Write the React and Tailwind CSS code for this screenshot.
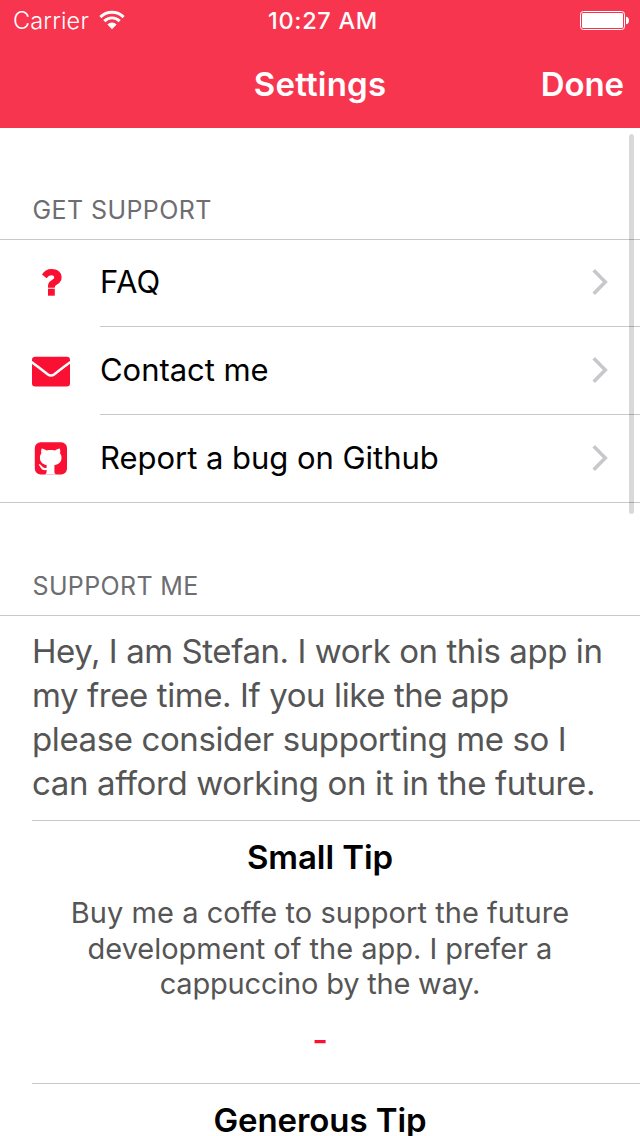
function WifiIcon() {
  return (
    <svg width="26" height="20" viewBox="0 0 26 20" className="shrink-0" fill="none" stroke="#fff">
      <path d="M1.4 7.1a16.4 16.4 0 0 1 23.2 0" strokeWidth="3" />
      <path d="M5.3 11.1a10.900 10.900 0 0 1 15.400 0" strokeWidth="2.900" />
      <path d="M13 19.200l-4.600-4.700a6.500 6.500 0 0 1 9.200 0z" fill="#fff" stroke="none" />
    </svg>
  );
}

function BatteryIcon() {
  return (
    <svg width="49" height="19" viewBox="0 0 49 19" className="shrink-0">
      <rect x="0.5" y="0.5" width="44" height="18" rx="2.8" fill="none" stroke="#fff" />
      <rect x="2" y="2" width="41" height="15" rx="1.2" fill="#fff" />
      <path d="M46 5.8c1.8 0 3 1.600 3 3.700s-1.200 3.700-3 3.700z" fill="#fff" />
    </svg>
  );
}

function QuestionIcon() {
  return (
    <svg width="40" height="40" viewBox="0 0 40 40" fill="#fa1032">
      <path d="M10 11.600C12 8 15.200 6 19.600 6c5.900 0 10 3.200 10 8.200 0 3.500-1.700 5.600-4.600 7.300-1.500.9-2.200 1.500-2.200 3.200H16v-1.600c0-3 1.300-4.700 4-6.200 1.600-.9 2.200-1.500 2.200-2.600 0-1.300-1.100-2.100-2.800-2.100-2 0-3.200.9-4.800 3z" />
      <path d="M16 25.700h6.800v7H16z" />
    </svg>
  );
}

function EnvelopeIcon() {
  return (
    <svg width="40" height="40" viewBox="0 0 40 40">
      <rect x="0" y="6.800" width="38" height="29.600" rx="3.200" fill="#fa1032" />
      <path d="M-0.500 12C4 15.200 10 19.800 15.600 24.200c2.600 1.900 4.200 1.900 6.800 0C28 19.800 34 15.200 38.500 12" fill="none" stroke="#fff" strokeWidth="2.500" />
    </svg>
  );
}

function GithubIcon() {
  return (
    <svg width="40" height="40" viewBox="0 0 40 40">
      <rect x="2.800" y="4.200" width="32.200" height="32.200" rx="5.800" fill="#fa1032" />
      <path
        d="M9.700 10.400c1.700.2 3.300 1 4.700 2.100 2.800-.6 5.800-.6 8.600 0 1.400-1.100 3-1.900 4.700-2.100.7 1.700.7 3.300.3 4.800 1 1.200 1.500 2.700 1.500 4.600 0 4.100-2.600 6.600-7.100 7.400v6.600c0 1.300.4 2 1.600 2.600H13c1.200-.6 1.600-1.300 1.600-2.600V32c-3.300.5-5-.4-6.200-2.700-.4-.9-.8-1.600-1.600-2.300-.3-.6.6-.9 1.400-.5 1 .5 1.400 1.200 2 2 1 1.300 2.200 1.700 4.400 1.200v-2.600c-4.300-.9-6.700-3.300-6.700-7.300 0-1.900.5-3.400 1.500-4.600-.4-1.500-.4-3.100.3-4.800z"
        fill="#fff"
      />
    </svg>
  );
}

function Chevron() {
  return (
    <svg width="16" height="26" viewBox="0 0 16 26" className="shrink-0" fill="none" stroke="#c7c7cc" strokeWidth="3.500">
      <path d="M1.700 1.200L13.300 13 1.700 24.800" />
    </svg>
  );
}

function SectionHeader({ children, className }) {
  return (
    <div className={"flex items-end border-b border-[#c8c7cc] pl-[32.5px] text-[25px] leading-8 text-[#6d6d72] " + className}>
      {children}
    </div>
  );
}

function Row({ icon, label, className, spacing }) {
  return (
    <div className={"flex " + className}>
      <div className="w-[100px] pt-[23px] pl-8">{icon}</div>
      <div className="flex flex-1 items-center justify-between border-b border-[#c8c7cc] pr-8 pb-0.5">
        <span className={"text-[31px] " + spacing}>{label}</span>
        <Chevron />
      </div>
    </div>
  );
}

function Tip({ title, lines }) {
  return (
    <div className="ml-8 h-[263px] border-b border-[#c8c7cc] pt-4 pr-8 text-center">
      <h2 className="text-[33px] leading-10 font-semibold tracking-[-0.08px]">{title}</h2>
      {lines && (
        <>
          <p className="mt-[18px] text-[29px] leading-[35.5px] text-[#555]">
            {lines.map(([text, spacing]) => (
              <span key={text} className={"block whitespace-nowrap " + spacing}>{text}</span>
            ))}
          </p>
          <button className="mt-[18px] block w-full text-[34px] leading-10 font-medium text-[#fa1032]">-</button>
        </>
      )}
    </div>
  );
}

export default function App() {
  return (
    <div className="relative h-[1136px] w-[640px] overflow-hidden bg-white font-['Inter','Liberation_Sans',sans-serif] text-black">
      <header className="h-32 bg-[#f7354f] text-white">
        <div className="grid h-10 grid-cols-3 items-center pr-[11px] pl-3 text-[23.5px]">
          <div className="flex items-center gap-2.5 pl-px">
            <span className="pt-0.5 font-[350] tracking-[0.15px]">Carrier</span>
            <WifiIcon />
          </div>
          <span className="pt-0.5 pl-[5px] text-center font-medium tracking-[0.7px] whitespace-nowrap">10:27 AM</span>
          <div className="flex justify-end pt-px"><BatteryIcon /></div>
        </div>
        <div className="grid h-[88px] grid-cols-3 items-center px-4 pt-0.5 text-[33px] font-semibold">
          <span />
          <h1 className="text-center tracking-[0.2px]">Settings</h1>
          <span className="text-right tracking-[-0.1px]">Done</span>
        </div>
      </header>

      <SectionHeader className="h-28 pb-[13px] tracking-[0.4px]">GET SUPPORT</SectionHeader>
      <div>
        <Row className="h-[87px]" icon={<QuestionIcon />} label="FAQ" spacing="tracking-[0.4px]" />
        <Row className="h-[88px]" icon={<EnvelopeIcon />} label="Contact me" spacing="pt-0.5 tracking-[-0.05px]" />
        <div className="border-b border-[#c8c7cc]">
          <Row className="-mb-px h-[88px]" icon={<GithubIcon />} label="Report a bug on Github" spacing="pt-0.5 tracking-[-0.03px]" />
        </div>
      </div>

      <SectionHeader className="h-[113px] pb-[13px] tracking-[0.35px]">SUPPORT ME</SectionHeader>
      <p className="ml-8 h-[205px] border-b border-[#c8c7cc] pt-[13px] text-[33px] leading-11 whitespace-nowrap text-[#555]">
        <span className="block tracking-[-0.43px]">Hey, I am Stefan. I work on this app in</span>
        <span className="block tracking-[-0.41px]">my free time. If you like the app</span>
        <span className="block tracking-[-0.39px]">please consider supporting me so I</span>
        <span className="block tracking-[-0.37px]">can afford working on it in the future.</span>
      </p>
      <Tip
        title="Small Tip"
        lines={[
          ["Buy me a coffe to support the future", "tracking-[0.05px]"],
          ["development of the app. I prefer a", "tracking-[-0.02px]"],
          ["cappuccino by the way.", "tracking-[-0.2px]"],
        ]}
      />
      <Tip title="Generous Tip" />

      <div className="absolute top-[134px] right-1.5 h-[380px] w-[5px] rounded-full bg-black/15" />
    </div>
  );
}
